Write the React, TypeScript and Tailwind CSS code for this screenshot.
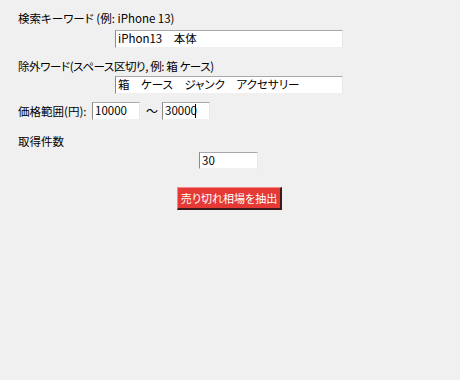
import React from "react";

const font = { fontFamily: '"Noto Sans CJK JP", "Noto Sans", sans-serif' };

function Entry({ value, w, h = 18, caret = false }: { value: string; w: number; h?: number; caret?: boolean }) {
  return (
    <div
      className="flex items-center bg-white border-t border-l border-t-[#a9a9a9] border-l-[#8a8a8a] border-b border-r border-b-[#f0f0f0] border-r-[#e8e8e8] pl-[2px] text-[11.5px] text-[#000] [font-feature-settings:'palt'] whitespace-pre overflow-hidden"
      style={{ width: w, height: h }}
    >
      <span>{value}</span>
      {caret && <span className="inline-block w-[1px] h-[14px] bg-black -ml-[2px]" />}
    </div>
  );
}

export default function App() {
  return (
    <div
      className="w-[460px] h-[380px] bg-[#f0f0f0] text-[#000] pt-[11px] pl-[18px] flex flex-col items-start [font-feature-settings:'palt']"
      style={font}
    >
      <div className="h-[14px] leading-[14px] text-[11.5px]">検索キーワード (例: iPhone 13)</div>
      <div className="mt-[5px] ml-[97px]">
        <Entry value="iPhon13　本体" w={228} />
      </div>
      <div className="mt-[11px] h-[14px] leading-[14px] text-[11.5px] tracking-[-0.4px]">除外ワード(スペース区切り, 例: 箱 ケース)</div>
      <div className="mt-[3px] ml-[97px]">
        <Entry value="箱　ケース　ジャンク　アクセサリー" w={228} />
      </div>
      <div className="mt-[8px] flex items-center h-[18px]">
        <div className="w-[74px] text-[11.5px] leading-[14px]">価格範囲(円):</div>
        <Entry value="10000" w={48} />
        <div className="w-[22px] pl-[2px] text-center text-[12px] leading-[14px]">～</div>
        <Entry value="30000" w={48} caret />
      </div>
      <div className="mt-[14px] h-[14px] leading-[14px] text-[11.5px]">取得件数</div>
      <div className="mt-[4px] ml-[181px]">
        <Entry value="30" w={59} h={17} />
      </div>
      <button
        className="mt-[18px] ml-[159px] w-[105px] h-[23px] bg-[#e53935] text-white text-[11px] leading-none flex items-center justify-center border-t border-l border-t-[#f08a88] border-l-[#f08a88] border-b-2 border-r-2 border-b-[#3a1a1a] border-r-[#3a1a1a]"
        style={font}
      >
        売り切れ相場を抽出
      </button>
    </div>
  );
}
